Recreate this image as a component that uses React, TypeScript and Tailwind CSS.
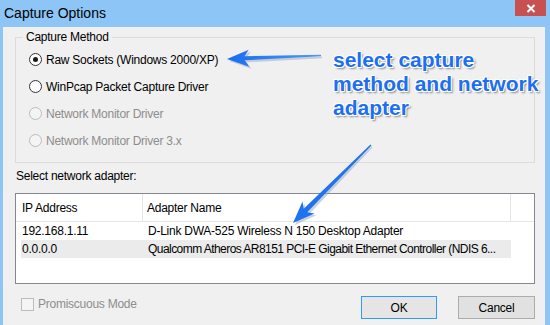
import React from "react";

function arrowPoints(tx: number, ty: number, hx: number, hy: number, tailW: number, shaftW: number, headL: number, headW: number) {
  const dx = hx - tx;
  const dy = hy - ty;
  const len = Math.sqrt(dx * dx + dy * dy);
  const ux = dx / len;
  const uy = dy / len;
  const nx = -uy;
  const ny = ux;
  const bx = hx - ux * headL;
  const by = hy - uy * headL;
  const nbx = hx - ux * (headL * 0.8);
  const nby = hy - uy * (headL * 0.8);
  const p = (x: number, y: number) => `${x.toFixed(1)},${y.toFixed(1)}`;
  return [
    p(tx + nx * tailW / 2, ty + ny * tailW / 2),
    p(nbx + nx * shaftW / 2, nby + ny * shaftW / 2),
    p(bx + nx * headW / 2, by + ny * headW / 2),
    p(hx, hy),
    p(bx - nx * headW / 2, by - ny * headW / 2),
    p(nbx - nx * shaftW / 2, nby - ny * shaftW / 2),
    p(tx - nx * tailW / 2, ty - ny * tailW / 2),
  ].join(" ");
}

function Radio({ checked, disabled, label }: { checked?: boolean; disabled?: boolean; label: string }) {
  return (
    <div className="flex h-[27px] items-center">
      <div
        className={
          "flex h-[13px] w-[13px] items-center justify-center rounded-full border " +
          (disabled ? "border-[#bcbcbc] bg-[#f4f4f4]" : "border-[#333333] bg-white")
        }
      >
        {checked && <div className="h-[5px] w-[5px] rounded-full bg-[#1a1a1a]" />}
      </div>
      <span className={"ml-[4px] " + (disabled ? "text-[#8d8d8d]" : "text-black")}>{label}</span>
    </div>
  );
}

export default function App() {
  const a1 = arrowPoints(321, 55.5, 227, 59, 1.5, 4, 22, 17);
  const a2 = arrowPoints(371, 145, 293, 223, 1.5, 5, 22, 17);
  const a1s = arrowPoints(322, 57.5, 229, 61, 1.5, 4, 22, 17);
  const a2s = arrowPoints(372, 147, 295, 225, 1.5, 5, 22, 17);
  return (
    <div
      className="relative flex h-[325px] w-[550px] flex-col overflow-hidden bg-[#8cc5f6] text-[12px] leading-[14px] tracking-[-0.25px]"
      style={{ fontFamily: '"Liberation Sans", Arial, sans-serif' }}
    >
      {/* Title bar */}
      <div className="flex h-[27px] shrink-0 items-start">
        <div className="ml-[4px] mt-[4px] text-[14px] leading-[18px] tracking-normal text-black">Capture Options</div>
        <div className="ml-auto mr-[4px] flex h-[16px] w-[31px] items-center justify-center bg-[#c75050]">
          <svg width="10" height="9" viewBox="0 0 10 9">
            <path d="M1.5 1 L8.5 8 M8.5 1 L1.5 8" stroke="#fff" strokeWidth="2" />
          </svg>
        </div>
      </div>

      {/* Body */}
      <div className="ml-[3px] mr-[5px] flex flex-1 flex-col bg-[#f0f0f0] pl-[12px] pr-[10px]">
        {/* Group box */}
        <div className="relative mt-[10px] h-[126px] w-[520px] border border-[#dcdcdc] pl-[13px] pt-[8px]">
          <span className="absolute left-[7px] top-[-8px] bg-[#f0f0f0] px-[3px] text-black">Capture Method</span>
          <Radio checked label="Raw Sockets (Windows 2000/XP)" />
          <Radio label="WinPcap Packet Capture Driver" />
          <Radio disabled label="Network Monitor Driver" />
          <Radio disabled label="Network Monitor Driver 3.x" />
        </div>

        <div className="ml-[1px] mt-[6px] h-[14px] text-black">Select network adapter:</div>

        {/* List */}
        <div className="mt-[10px] flex h-[91px] w-[520px] flex-col border border-[#828790] bg-white">
          <div className="flex h-[28px] shrink-0 items-center border-b border-[#e5e5e5]">
            <div className="flex h-full w-[127px] shrink-0 items-center border-r border-[#e5e5e5] pl-[6px]">IP Address</div>
            <div className="flex h-full w-[368px] shrink-0 items-center border-r border-[#e5e5e5] pl-[4px]">Adapter Name</div>
          </div>
          <div className="ml-[5px] flex h-[18px] w-[490px] items-center">
            <div className="w-[122px] shrink-0 pl-[1px]">192.168.1.11</div>
            <div className="whitespace-nowrap pl-[5px]">D-Link DWA-525 Wireless N 150 Desktop Adapter</div>
          </div>
          <div className="ml-[5px] flex h-[18px] w-[490px] items-center overflow-hidden bg-[#ebebeb]">
            <div className="w-[122px] shrink-0 pl-[1px]">0.0.0.0</div>
            <div className="whitespace-nowrap pl-[5px] tracking-[-0.55px]">Qualcomm Atheros AR8151 PCI-E Gigabit Ethernet Controller (NDIS 6...</div>
          </div>
        </div>

        {/* Bottom row */}
        <div className="mt-[12px] flex items-start">
          <div className="ml-[6px] mt-[1px] flex items-center">
            <div className="h-[13px] w-[13px] border border-[#bcbcbc] bg-[#f4f4f4]" />
            <span className="ml-[4px] text-[#8d8d8d]">Promiscuous Mode</span>
          </div>
          <div className="ml-auto flex gap-[21px]">
            <div className="flex h-[23px] w-[76px] items-center justify-center border border-[#3399ff] bg-[#e5e5e5] text-black">OK</div>
            <div className="flex h-[23px] w-[77px] items-center justify-center border border-[#acacac] bg-[#e1e1e1] text-black">Cancel</div>
          </div>
        </div>
      </div>

      {/* Annotation arrows */}
      <svg className="pointer-events-none absolute left-0 top-0" width="550" height="325">
        <defs>
          <linearGradient id="g1" x1="0" y1="0" x2="1" y2="0">
            <stop offset="0" stopColor="#1a6cf0" />
            <stop offset="1" stopColor="#4a9af8" />
          </linearGradient>
        </defs>
        <polygon points={a1s} fill="#9aa6b8" opacity="0.5" />
        <polygon points={a2s} fill="#9aa6b8" opacity="0.5" />
        <polygon points={a1} fill="url(#g1)" />
        <polygon points={a2} fill="#1f73f0" />
      </svg>

      {/* Annotation text */}
      <div className="absolute left-[333px] top-[48px] text-[21px] font-bold leading-[24px] tracking-normal text-[#1c6ff2] [text-shadow:-1px_-1px_0_#fff,1px_-1px_0_#fff,-1px_1px_0_#fff,1px_1px_0_#fff,2px_2px_2px_#888]">
        select capture
        <br />
        method and network
        <br />
        adapter
      </div>
    </div>
  );
}
